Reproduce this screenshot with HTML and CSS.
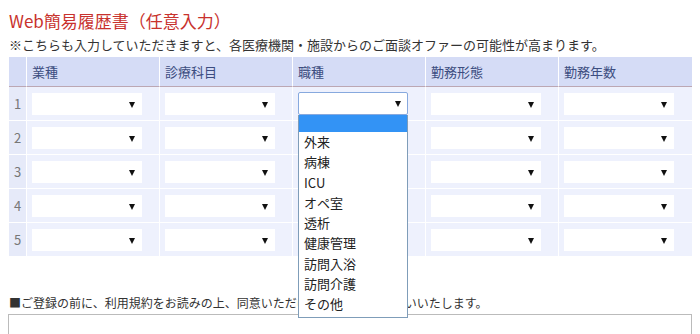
FILE: index.html
```html
<!DOCTYPE html>
<html lang="ja">
<head>
<meta charset="utf-8">
<title>Web簡易履歴書</title>
<link rel="stylesheet" href="styles.css">
</head>
<body>
<div class="page">
  <h1 class="title">Web簡易履歴書（任意入力）</h1>
  <p class="note">※こちらも入力していただきますと、各医療機関・施設からのご面談オファーの可能性が高まります。</p>
  <table class="career">
    <colgroup>
      <col class="c-num"><col><col><col><col><col>
    </colgroup>
    <thead>
      <tr><th></th><th>業種</th><th>診療科目</th><th>職種</th><th>勤務形態</th><th>勤務年数</th></tr>
    </thead>
    <tbody>
      <tr>
        <td class="num">1</td>
        <td><div class="sel"><span class="arrow"></span></div></td>
        <td><div class="sel"><span class="arrow"></span></div></td>
        <td>
          <div class="sel focus"><span class="arrow"></span>
            <ul class="list">
              <li class="hl"></li>
              <li>外来</li>
              <li>病棟</li>
              <li>ICU</li>
              <li>オペ室</li>
              <li>透析</li>
              <li>健康管理</li>
              <li>訪問入浴</li>
              <li>訪問介護</li>
              <li>その他</li>
            </ul>
          </div>
        </td>
        <td><div class="sel"><span class="arrow"></span></div></td>
        <td><div class="sel"><span class="arrow"></span></div></td>
      </tr>
      <tr>
        <td class="num">2</td>
        <td><div class="sel"><span class="arrow"></span></div></td>
        <td><div class="sel"><span class="arrow"></span></div></td>
        <td><div class="sel"><span class="arrow"></span></div></td>
        <td><div class="sel"><span class="arrow"></span></div></td>
        <td><div class="sel"><span class="arrow"></span></div></td>
      </tr>
      <tr>
        <td class="num">3</td>
        <td><div class="sel"><span class="arrow"></span></div></td>
        <td><div class="sel"><span class="arrow"></span></div></td>
        <td><div class="sel"><span class="arrow"></span></div></td>
        <td><div class="sel"><span class="arrow"></span></div></td>
        <td><div class="sel"><span class="arrow"></span></div></td>
      </tr>
      <tr>
        <td class="num">4</td>
        <td><div class="sel"><span class="arrow"></span></div></td>
        <td><div class="sel"><span class="arrow"></span></div></td>
        <td><div class="sel"><span class="arrow"></span></div></td>
        <td><div class="sel"><span class="arrow"></span></div></td>
        <td><div class="sel"><span class="arrow"></span></div></td>
      </tr>
      <tr>
        <td class="num">5</td>
        <td><div class="sel"><span class="arrow"></span></div></td>
        <td><div class="sel"><span class="arrow"></span></div></td>
        <td><div class="sel"><span class="arrow"></span></div></td>
        <td><div class="sel"><span class="arrow"></span></div></td>
        <td><div class="sel"><span class="arrow"></span></div></td>
      </tr>
    </tbody>
  </table>
  <p class="terms">■ご登録の前に、利用規約をお読みの上、同意いただけた方は登録をお願いいたします。</p>
  <textarea class="rules" rows="4" readonly></textarea>
</div>
</body>
</html>
```
FILE: styles.css
```css
html, body {
  margin: 0;
  padding: 0;
  background: #fff;
}
body {
  font-family: "Noto Sans CJK JP", "Noto Sans", sans-serif;
  color: #333;
  overflow: hidden;
}
.page {
  padding: 9px 8px 0 9px;
}
.title {
  margin: 0;
  font-size: 17px;
  font-weight: normal;
  line-height: 24px;
  color: #c8322d;
}
.note {
  margin: 3px 0 0;
  font-size: 13px;
  line-height: 18px;
  color: #333;
}
.career {
  margin-top: 3px;
  width: 683px;
  table-layout: fixed;
  border-collapse: separate;
  border-spacing: 0;
}
.c-num {
  width: 18px;
}
.career th {
  height: 29px;
  padding: 0 0 0 5px;
  background: #d5dcf6;
  border-right: 1px solid #fff;
  border-bottom: 1px solid #bca7b3;
  font-size: 13px;
  font-weight: normal;
  color: #3c4d80;
  text-align: left;
}
.career td {
  height: 33px;
  padding: 0 0 0 5px;
  background: #eef1fd;
  border-right: 1px solid #fff;
  border-bottom: 1px solid #fff;
  vertical-align: middle;
}
.career th:last-child,
.career td:last-child {
  border-right: none;
}
.career td.num {
  padding: 0;
  background: #e6eaf9;
  text-align: center;
  font-size: 13px;
  color: #777;
}
.sel {
  position: relative;
  box-sizing: border-box;
  width: 110px;
  height: 22px;
  background: #fff;
}
.sel.focus {
  height: 23px;
  border: 1px solid #87a9de;
  border-radius: 2px;
}
.arrow {
  position: absolute;
  right: 7px;
  top: 9px;
  width: 0;
  height: 0;
  border-left: 3.5px solid transparent;
  border-right: 3.5px solid transparent;
  border-top: 6px solid #111;
}
.sel.focus .arrow {
  right: 6px;
  top: 8px;
}
.list {
  position: absolute;
  left: -1px;
  top: 22px;
  z-index: 5;
  box-sizing: border-box;
  width: 110px;
  margin: 0;
  padding: 0 0 2px;
  list-style: none;
  background: #fff;
  border: 1px solid #7f9db9;
  border-top: none;
}
.list li {
  height: 20.3px;
  line-height: 20.3px;
  padding-left: 5px;
  font-size: 13px;
  color: #222;
}
.list li.hl {
  height: 17px;
  background: #3393f5;
}
.terms {
  margin: 38px 0 0;
  font-size: 12px;
  line-height: 16px;
  color: #333;
}
.rules {
  display: block;
  box-sizing: border-box;
  margin: 3px 0 0 -1px;
  width: 684px;
  height: 80px;
  border: 1px solid #bbb;
  resize: none;
  overflow-y: scroll;
  font-family: inherit;
}
```
